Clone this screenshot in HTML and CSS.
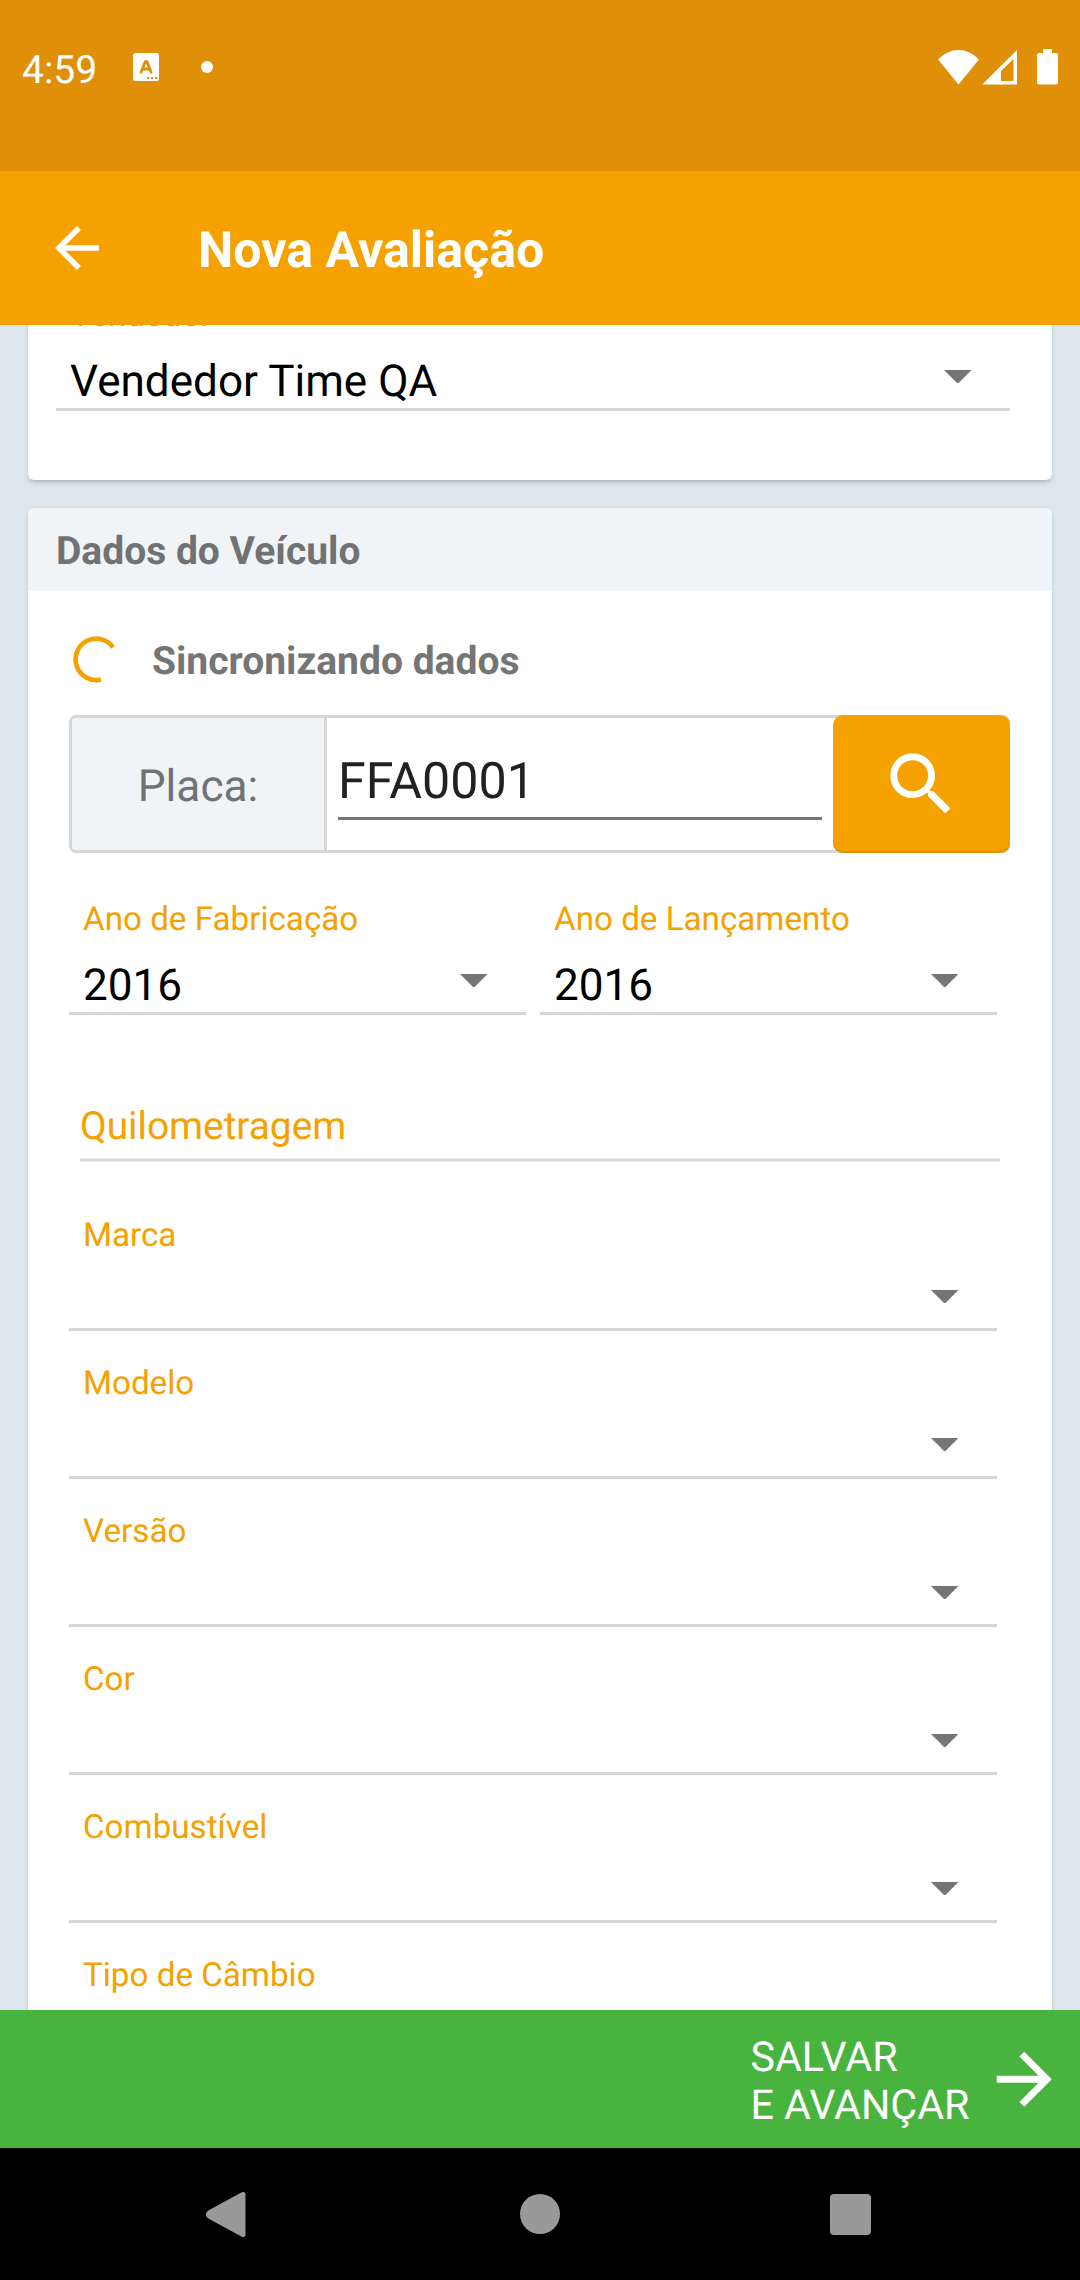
FILE: index.html
```html
<!DOCTYPE html>
<html lang="pt-BR">
<head>
<meta charset="utf-8">
<title>Nova Avaliação</title>
<link rel="stylesheet" href="styles.css">
</head>
<body>
<svg class="defs" width="0" height="0">
  <symbol id="caret" viewBox="0 0 10 5"><path d="M0 0h10L5 5z"/></symbol>
</svg>

<div class="status-bar">
  <span class="clock">4:59</span>
  <svg class="app-badge" width="26" height="28" viewBox="0 0 26 28">
    <rect width="26" height="28" rx="2.5" fill="#fff"/>
    <path d="M8 19.2L12.3 8.6h1.6L18.200 19.200M9.800 16h6.800" fill="none" stroke="#df9008" stroke-width="2.800" stroke-linecap="round" stroke-linejoin="round"/>
    <path d="M14 25h2.200M18 25h2.200M22 25h2.200" stroke="#df9008" stroke-width="2"/>
  </svg>
  <span class="dot"></span>
  <svg class="system-icons" width="122" height="38" viewBox="936 48 122 38" fill="#fff">
    <path d="M958.500 84.500L938 59.500Q947 50 958.500 50T979 59.500z"/>
    <path fill-rule="evenodd" d="M982.300 84.500H1017V50zM1001 81V71l12.500-12V81z"/>
    <path d="M1043 49h9v4h4a2 2 0 0 1 2 2v27.500a2 2 0 0 1-2 2h-17a2 2 0 0 1-2-2V55a2 2 0 0 1 2-2h4z"/>
  </svg>
</div>

<header class="app-bar">
  <svg class="back" width="66" height="66" viewBox="0 0 24 24" fill="#fff"><path d="M20 11H7.830l5.590-5.590L12 4l-8 8 8 8 1.410-1.410L7.830 13H20v-2z"/></svg>
  <h1 class="title">Nova Avaliação</h1>
</header>

<main class="content">
  <section class="card card-seller">
    <div class="field">
      <span class="label">Vendedor</span>
      <div class="value">Vendedor Time QA<svg class="caret"><use href="#caret"/></svg></div>
    </div>
  </section>

  <section class="card card-vehicle">
    <h2 class="card-title">Dados do Veículo</h2>
    <div class="card-body">
      <div class="sync">
        <svg width="47" height="48" viewBox="0 0 47 48"><path d="M42.100 11.300A20.700 20.700 0 1 0 30 43.500" fill="none" stroke="#f5a100" stroke-width="4.600"/></svg>
        <span>Sincronizando dados</span>
      </div>
      <div class="plate">
        <span class="plate-label">Placa:</span>
        <span class="plate-input">FFA0001</span>
        <span class="search"><svg width="82.500" height="82.500" viewBox="0 0 24 24" fill="#fff"><path d="M15.500 14h-.79l-.28-.27C15.410 12.590 16 11.110 16 9.500 16 5.910 13.090 3 9.500 3S3 5.910 3 9.500 5.910 16 9.500 16c1.610 0 3.090-.59 4.230-1.570l.27.28v.79l5 4.990L20.490 19l-4.990-5zm-6 0C7.010 14 5 11.990 5 9.500S7.010 5 9.500 5 14 7.010 14 9.500 11.990 14 9.500 14z"/></svg></span>
      </div>
      <div class="fields">
        <div class="years">
          <div class="field">
            <span class="label">Ano de Fabricação</span>
            <div class="value">2016<svg class="caret"><use href="#caret"/></svg></div>
          </div>
          <div class="field">
            <span class="label">Ano de Lançamento</span>
            <div class="value">2016<svg class="caret"><use href="#caret"/></svg></div>
          </div>
        </div>
        <div class="mileage">Quilometragem</div>
        <div class="field"><span class="label">Marca</span><div class="value"><svg class="caret"><use href="#caret"/></svg></div></div>
        <div class="field"><span class="label">Modelo</span><div class="value"><svg class="caret"><use href="#caret"/></svg></div></div>
        <div class="field"><span class="label">Versão</span><div class="value"><svg class="caret"><use href="#caret"/></svg></div></div>
        <div class="field"><span class="label">Cor</span><div class="value"><svg class="caret"><use href="#caret"/></svg></div></div>
        <div class="field"><span class="label">Combustível</span><div class="value"><svg class="caret"><use href="#caret"/></svg></div></div>
        <div class="field"><span class="label">Tipo de Câmbio</span></div>
      </div>
    </div>
  </section>
</main>

<footer class="save-bar">
  <span class="save-text">SALVAR<br>E AVANÇAR</span>
  <svg width="82.500" height="82.500" viewBox="0 0 24 24" fill="#fff"><path d="M12 4l-1.410 1.410L16.170 11H4v2h12.170l-5.580 5.590L12 20l8-8z"/></svg>
</footer>

<nav class="nav-bar">
  <svg width="1080" height="132" viewBox="0 0 1080 132" fill="#999">
    <path d="M209 64.500L242 46.500V86.500L209 68.500Q205.500 66.500 209 64.500z" stroke="#999" stroke-width="5" stroke-linejoin="round" transform="translate(1 0)"/>
    <circle cx="540" cy="66" r="20"/>
    <rect x="830" y="46" width="41" height="41" rx="4"/>
  </svg>
</nav>
</body>
</html>
```
FILE: styles.css
```css
* {
  box-sizing: border-box;
}

body {
  margin: 0;
  width: 1080px;
  height: 2280px;
  overflow: hidden;
  display: flex;
  flex-direction: column;
  font-family: Roboto, "Liberation Sans", sans-serif;
  background: #dee6ed;
  text-rendering: geometricPrecision;
}

svg {
  display: block;
  flex: none;
}

.defs {
  display: none;
}

h1,
h2 {
  margin: 0;
}

/* System status bar */
.status-bar {
  height: 171px;
  flex: none;
  display: flex;
  align-items: flex-start;
  padding: 47px 22px 0;
  background: #df9008;
  color: #fff;
}

.clock {
  width: 111px;
  font-size: 39px;
  line-height: 46px;
}

.app-badge {
  margin-top: 6px;
}

.dot {
  width: 12px;
  height: 12px;
  margin: 14px 0 0 42px;
  border-radius: 50%;
  background: #fff;
}

.system-icons {
  margin: 1px 0 0 auto;
}

/* App bar */
.app-bar {
  height: 154px;
  flex: none;
  display: flex;
  align-items: center;
  padding-left: 44px;
  background: #f5a100;
  color: #fff;
}

.title {
  margin: 5px 0 0 88px;
  font-size: 50.1px;
  line-height: 60px;
  font-weight: 700;
}

/* Scrolled form */
.content {
  height: 1685px;
  flex: none;
  overflow: hidden;
  padding: 0 28px;
}

.card {
  background: #fff;
  border-radius: 6px;
  box-shadow: 0 3px 4px -1px rgba(70, 80, 70, 0.35), 0 -1px 1px -1px rgba(70, 80, 70, 0.3);
}

.card-seller {
  margin-top: -62px;
  padding: 0 42px 69px 28px;
}

.card-vehicle {
  margin-top: 28px;
  overflow: hidden;
}

.card-title {
  height: 83px;
  padding: 20px 28px 0;
  background: #f0f4f7;
  color: #717273;
  font-size: 39px;
  line-height: 46px;
}

.card-body {
  padding: 45px 42px 0 41px;
}

.field {
  height: 148px;
  padding: 33px 0 1px;
  display: flex;
  flex-direction: column;
  gap: 19px;
  border-bottom: 3px solid #d6d6d6;
}

.label {
  padding-left: 14px;
  color: #f5a100;
  font-size: 33.2px;
  line-height: 40px;
}

.value {
  height: 52px;
  padding: 0 38.4px 0 14px;
  display: flex;
  justify-content: space-between;
  font-size: 44.1px;
  line-height: 52px;
  color: #000;
}

.caret {
  width: 27.5px;
  height: 13.75px;
  margin: 14.5px 0 0 auto;
  fill: #757575;
}

.sync {
  height: 48px;
  padding-left: 2px;
  display: flex;
  gap: 34px;
  color: #757575;
  font-size: 39px;
  font-weight: 700;
  line-height: 50px;
}

.plate {
  height: 138px;
  margin-top: 31px;
  display: flex;
  border: 3px solid #d6d6d6;
  border-radius: 7px;
}

.plate-label {
  width: 255px;
  flex: none;
  padding-top: 2px;
  border-right: 3px solid #d6d6d6;
  border-radius: 4px 0 0 4px;
  background: #f0f4f7;
  color: #717273;
  font-size: 44.2px;
  line-height: 132px;
  text-align: center;
}

.plate-input {
  flex: 1;
  height: 87px;
  margin: 15px 11px 0;
  padding: 20px 0 0 0;
  border-bottom: 3px solid #757575;
  color: #212121;
  font-size: 50.2px;
  line-height: 58px;
}

.search {
  width: 177px;
  height: 138px;
  flex: none;
  margin: -3px -3px 0 0;
  display: flex;
  align-items: center;
  justify-content: center;
  border-radius: 10px;
  background: #f5a100;
  box-shadow: inset 0 -2px 0 #df9008;
}

.fields {
  padding: 14px 13px 0 0;
}

.years {
  display: grid;
  grid-template-columns: 457px 457px;
  gap: 14px;
}

/* Underline has a faint edge above and below the 2px core */
.mileage {
  margin: 88px -3px 21px 11px;
  height: 59px;
  padding-top: 1px;
  background: linear-gradient(#eee 0 1px, #d6d6d6 1px 3px, #eee 3px) bottom / 100% 4px no-repeat;
  color: #f5a100;
  font-size: 38.8px;
  line-height: 46px;
}

/* Bottom action */
.save-bar {
  height: 138px;
  flex: none;
  display: flex;
  align-items: center;
  justify-content: flex-end;
  gap: 13px;
  padding-right: 15px;
  background: #49b33f;
  color: #fff;
}

.save-text {
  padding-top: 6px;
  font-size: 41.25px;
  line-height: 48.3px;
}

.nav-bar {
  height: 132px;
  flex: none;
  background: #000;
}
```
